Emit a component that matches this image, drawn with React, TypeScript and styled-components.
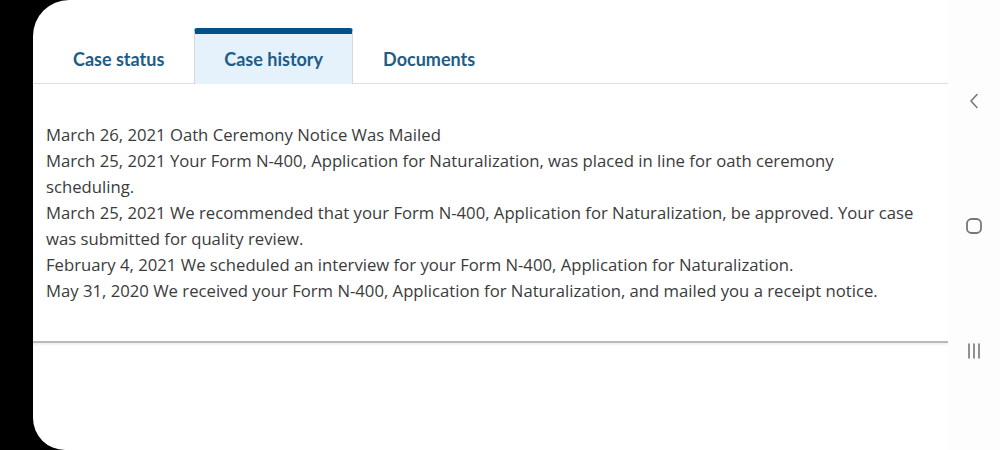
import React from 'react';
import styled, { createGlobalStyle } from 'styled-components';

const GlobalStyle = createGlobalStyle`
  html, body {
    margin: 0;
    padding: 0;
    background: #000;
  }
  body {
    font-family: Lato, "Liberation Sans", sans-serif;
  }
`;

const Page = styled.div`
  width: 1000px;
  height: 450px;
  display: flex;
  background: #000;
  overflow: hidden;
`;

const Screen = styled.div`
  flex: 1;
  margin-left: 33px;
  display: flex;
  background: #fff;
  border-radius: 36px 0 0 32px;
  overflow: hidden;
`;

const Main = styled.div`
  flex: 1;
  display: flex;
  flex-direction: column;
`;

const TabBar = styled.div`
  display: flex;
  align-items: flex-end;
  height: 84px;
  padding: 0 10px;
  border-bottom: 1px solid #dcdee0;
  box-sizing: border-box;
`;

const Tab = styled.div<{ $active?: boolean }>`
  height: 56px;
  box-sizing: border-box;
  padding: 0 29px;
  display: flex;
  align-items: center;
  font-size: 18px;
  font-weight: 700;
  color: #1d5d87;
  background: ${p => (p.$active ? '#e6f2fb' : 'transparent')};
  border-top: 6px solid ${p => (p.$active ? '#005288' : 'transparent')};
  border-left: 1px solid ${p => (p.$active ? '#d6d9dc' : 'transparent')};
  border-right: 1px solid ${p => (p.$active ? '#d6d9dc' : 'transparent')};
  border-radius: 3px 3px 0 0;
  margin-bottom: -1px;
`;

const History = styled.div`
  padding: 38px 28px 37px 13px;
  border-bottom: 2px solid #b9b9b9;
  box-shadow: 0 2px 2px rgba(0, 0, 0, 0.06);
`;

const Entry = styled.p`
  margin: 0;
  font-family: "Open Sans", sans-serif;
  font-size: 16.7px;
  line-height: 26px;
  color: #3b3b3b;
`;

const NavBar = styled.div`
  width: 52px;
  background: #fdfdfd;
  display: flex;
  flex-direction: column;
  align-items: center;
  padding-top: 92px;
  gap: 107px;
  color: #777;
`;

const NavIcon = styled.svg`
  width: 18px;
  height: 18px;
  display: block;
`;

const entries = [
  'March 26, 2021 Oath Ceremony Notice Was Mailed',
  'March 25, 2021 Your Form N-400, Application for Naturalization, was placed in line for oath ceremony scheduling.',
  'March 25, 2021 We recommended that your Form N-400, Application for Naturalization, be approved. Your case was submitted for quality review.',
  'February 4, 2021 We scheduled an interview for your Form N-400, Application for Naturalization.',
  'May 31, 2020 We received your Form N-400, Application for Naturalization, and mailed you a receipt notice.',
];

const tabs = ['Case status', 'Case history', 'Documents'];

export default function App() {
  return (
    <Page>
      <GlobalStyle />
      <Screen>
        <Main>
          <TabBar>
            {tabs.map(t => (
              <Tab key={t} $active={t === 'Case history'}>
                {t}
              </Tab>
            ))}
          </TabBar>
          <History>
            {entries.map((e, i) => (
              <Entry key={i}>{e}</Entry>
            ))}
          </History>
        </Main>
        <NavBar>
          <NavIcon viewBox="0 0 18 18" fill="none" stroke="currentColor" strokeWidth="1.6" strokeLinecap="round" strokeLinejoin="round">
            <path d="M12 2.5 L6 9 L12 15.5" />
          </NavIcon>
          <NavIcon viewBox="0 0 18 18" fill="none" stroke="currentColor" strokeWidth="1.8">
            <rect x="2" y="2" width="14" height="14" rx="4.5" />
          </NavIcon>
          <NavIcon viewBox="0 0 18 18" fill="none" stroke="currentColor" strokeWidth="1.6" strokeLinecap="round">
            <path d="M4 2 V16 M9 2 V16 M14 2 V16" />
          </NavIcon>
        </NavBar>
      </Screen>
    </Page>
  );
}
